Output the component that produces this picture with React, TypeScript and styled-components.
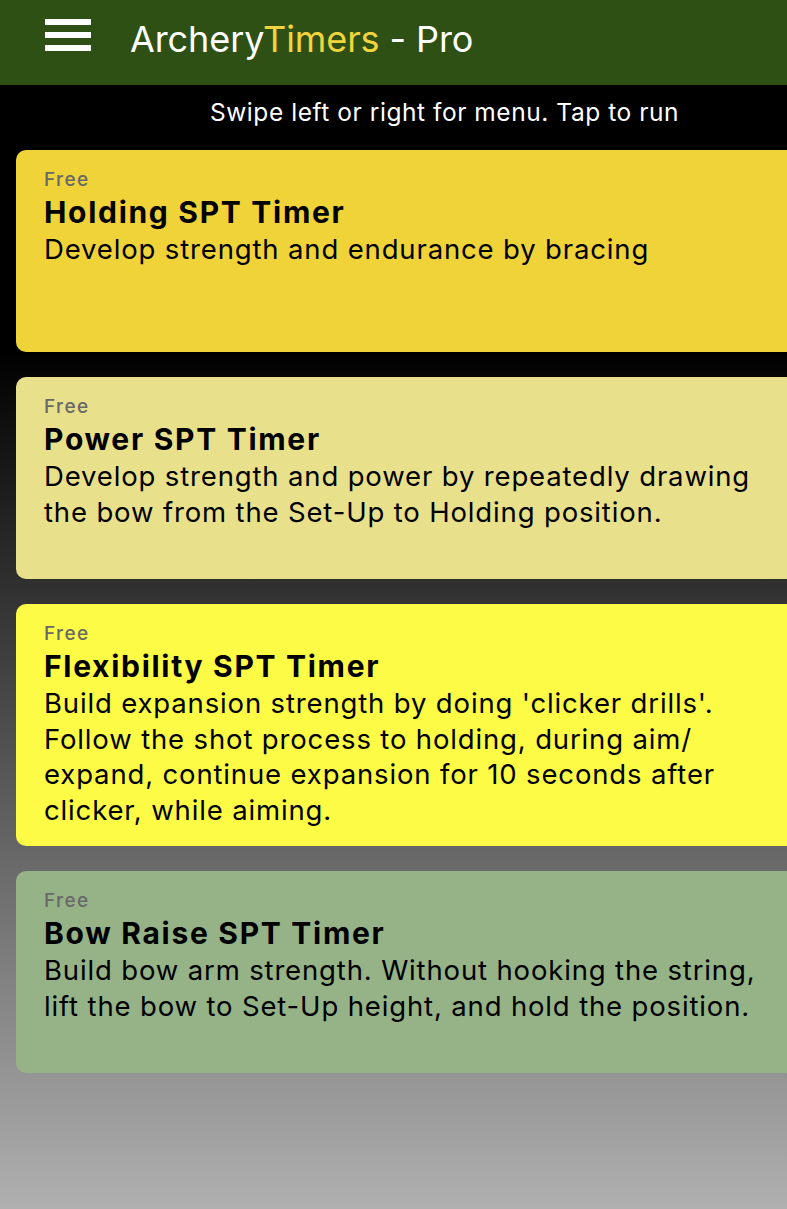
import React from 'react'
import styled, { createGlobalStyle } from 'styled-components'

const timers = [
  {
    title: 'Holding SPT Timer',
    text: 'Develop strength and endurance by bracing',
    color: '#efd338',
  },
  {
    title: 'Power SPT Timer',
    text: 'Develop strength and power by repeatedly drawing the bow from the Set-Up to Holding position.',
    color: '#e8e08a',
  },
  {
    title: 'Flexibility SPT Timer',
    text: "Build expansion strength by doing 'clicker drills'. Follow the shot process to holding, during aim/ expand, continue expansion for 10 seconds after clicker, while aiming.",
    color: '#fdfb45',
  },
  {
    title: 'Bow Raise SPT Timer',
    text: 'Build bow arm strength. Without hooking the string, lift the bow to Set-Up height, and hold the position.',
    color: '#95b387',
  },
]

const GlobalStyle = createGlobalStyle`
  html, body {
    margin: 0;
    padding: 0;
    overflow-x: hidden;
    font-family: Inter, 'Noto Sans', sans-serif;
  }
`

const App = () => {
  return (
    <Page>
      <GlobalStyle />
      <Header>
        <MenuButton aria-label="menu">
          <svg width="46" height="33" viewBox="0 0 46 33">
            <rect x="0" y="0" width="46" height="6" fill="#fff" />
            <rect x="0" y="13" width="46" height="6" fill="#fff" />
            <rect x="0" y="26" width="46" height="6" fill="#fff" />
          </svg>
        </MenuButton>
        <Title>
          Archery<Accent>Timers</Accent> - Pro
        </Title>
      </Header>
      <Content>
        <Hint>Swipe left or right for menu. Tap to run</Hint>
        <List>
          {timers.map((t) => (
            <Card key={t.title} $bg={t.color}>
              <Tag>Free</Tag>
              <CardTitle>{t.title}</CardTitle>
              <CardText>{t.text}</CardText>
            </Card>
          ))}
        </List>
      </Content>
    </Page>
  )
}

const Page = styled.div`
  min-height: 1209px;
  display: flex;
  flex-direction: column;
`

const Header = styled.header`
  height: 85px;
  background-color: #2e5015;
  display: flex;
  align-items: center;
  padding-left: 45px;
  gap: 39px;
`

const MenuButton = styled.div`
  display: flex;
  margin-top: -15px;
`

const Title = styled.h1`
  margin: 0 0 8px;
  font-size: 36px;
  font-weight: 400;
  color: #fff;
  letter-spacing: -0.1px;
`

const Accent = styled.span`
  color: #f2d53c;
`

const Content = styled.main`
  flex: 1;
  background: linear-gradient(to bottom, #000 0%, #000 23.5%, #b0b0b0 100%);
  padding-bottom: 40px;
`

const Hint = styled.div`
  height: 65px;
  display: flex;
  align-items: center;
  padding-left: 210px;
  padding-bottom: 12px;
  box-sizing: border-box;
  color: #fff;
  font-size: 24.5px;
  letter-spacing: 0.55px;
`

const List = styled.div`
  display: flex;
  flex-direction: column;
  gap: 25px;
`

const Card = styled.div<{ $bg: string }>`
  background-color: ${(p) => p.$bg};
  margin-left: 16px;
  margin-right: -20px;
  border-radius: 10px;
  min-height: 202px;
  box-sizing: border-box;
  padding: 17px 37px 17px 28px;
  color: #000;
`

const Tag = styled.div`
  font-size: 19px;
  font-weight: 500;
  color: #686868;
  line-height: 26px;
  letter-spacing: 1.4px;
`

const CardTitle = styled.div`
  font-size: 30px;
  font-weight: 700;
  line-height: 39px;
  letter-spacing: 1.7px;
`

const CardText = styled.div`
  font-size: 27.5px;
  line-height: 35.7px;
  letter-spacing: 0.85px;
`

export default App
